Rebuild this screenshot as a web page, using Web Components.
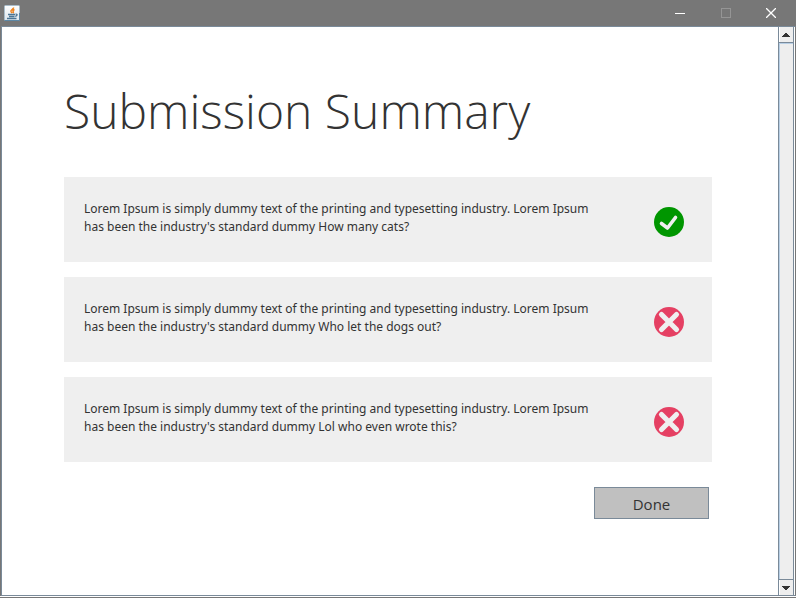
<!DOCTYPE html>
<html lang="en">
<head>
<meta charset="utf-8">
<title>Submission Summary</title>
<style>
  html, body { height: 100%; margin: 0; }
  body { font-family: "Noto Sans", "Open Sans", sans-serif; color: #333; }
</style>
</head>
<body>
<app-window>
  <submission-summary heading="Submission Summary">
    <result-card status="correct">Lorem Ipsum is simply dummy text of the printing and typesetting industry. Lorem Ipsum has been the industry's standard dummy How many cats?</result-card>
    <result-card status="wrong">Lorem Ipsum is simply dummy text of the printing and typesetting industry. Lorem Ipsum has been the industry's standard dummy Who let the dogs out?</result-card>
    <result-card status="wrong">Lorem Ipsum is simply dummy text of the printing and typesetting industry. Lorem Ipsum has been the industry's standard dummy Lol who even wrote this?</result-card>
    <done-button slot="actions">Done</done-button>
  </submission-summary>
</app-window>

<script>
  class BaseElement extends HTMLElement {
    constructor() {
      super();
      this.attachShadow({ mode: 'open' });
    }
    connectedCallback() {
      this.shadowRoot.innerHTML = this.render();
    }
  }

  class TitleBar extends BaseElement {
    render() {
      return `
        <style>
          :host { display: flex; height: 26px; align-items: center; justify-content: space-between; background: #777; }
          .logo { display: block; margin-left: 4px; }
          nav { display: flex; padding-right: 2px; }
          button { display: grid; place-items: center; width: 46px; height: 26px; padding: 0; border: 0; background: none; color: #fff; }
          button:disabled { color: #959595; width: 45px; }
          svg { display: block; }
        </style>
        <svg class="logo" width="16" height="16" viewBox="0 0 16 16" aria-hidden="true">
          <defs><linearGradient id="g" x1="0" y1="0" x2="0" y2="1"><stop offset="0" stop-color="#fff"/><stop offset="1" stop-color="#dce6ee"/></linearGradient></defs>
          <rect x=".5" y=".5" width="15" height="15" rx="1" fill="url(#g)" stroke="#a9bdcb"/>
          <path d="M.5 15.5h15V8" fill="none" stroke="#5c87a5"/>
          <path d="M9.5 2.500c.6 1.500-3.600 2.300-2.500 4.200L8 8.200M10.500 4.500c-1.800.8-1.800 1.500-1.200 2.300.3.500 0 1-.5 1.400" fill="none" stroke="#ee8420" stroke-width="1.500"/>
          <path d="M4 9.500h7M5 11.500h5.500M11.500 9.200c2.400-.4 2 1.700-.3 2.200M3 13.500h9.500" fill="none" stroke="#4b7695" stroke-width="1.300"/>
        </svg>
        <nav aria-label="Window controls">
          <button aria-label="Minimize"><svg width="10" height="10"><path d="M0 5.500h10" stroke="currentColor"/></svg></button>
          <button aria-label="Maximize" disabled><svg width="10" height="10"><rect x=".5" y=".5" width="9" height="9" fill="none" stroke="currentColor"/></svg></button>
          <button aria-label="Close"><svg width="10" height="10"><path d="M0 0l10 10M10 0L0 10" stroke="currentColor" stroke-width="1.300"/></svg></button>
        </nav>`;
    }
  }

  class ScrollBar extends BaseElement {
    render() {
      return `
        <style>
          :host { display: flex; flex-direction: column; box-sizing: border-box; width: 16px; border: 1px solid #7a8a99; border-width: 0 1px; background: #fff; }
          button { display: grid; place-items: center start; height: 15px; padding: 0 0 0 2px; border: 0; border-left: 1px solid #fff; background: #eee; flex: none; }
          .track { flex: 1; border: 1px solid #7a8a99; border-width: 1px 0; box-shadow: inset 1px 1px #b8cfe5; background: #eee; }
          svg { display: block; }
        </style>
        <button aria-label="Scroll up"><svg width="8" height="4" shape-rendering="crispEdges"><path d="M3 0h2v1h1v1h1v1h1v1H0V3h1V2h1V1h1z" fill="#333"/></svg></button>
        <div class="track"></div>
        <button aria-label="Scroll down"><svg width="8" height="4" shape-rendering="crispEdges"><path d="M0 0h8v1H7v1H6v1H5v1H3V3H2V2H1V1H0z" fill="#333"/></svg></button>`;
    }
  }

  class AppWindow extends BaseElement {
    render() {
      return `
        <style>
          :host { display: flex; flex-direction: column; box-sizing: border-box; min-height: 100%; background: #fff; border-bottom: 1px solid #777; }
          .body { flex: 1; display: flex; margin: 0 0 1px 1px; padding-right: 1px; border: 1px solid #7a8a99; border-right-color: #777; box-shadow: -1px 0 #777; }
          main { flex: 1; min-width: 0; }
        </style>
        <title-bar></title-bar>
        <div class="body">
          <main><slot></slot></main>
          <scroll-bar></scroll-bar>
        </div>`;
    }
  }

  class SubmissionSummary extends BaseElement {
    render() {
      return `
        <style>
          :host { display: block; padding: 48px 66px 24px 62px; }
          h1 { margin: 0; font: 300 48px/72px "Open Sans", "Noto Sans", sans-serif; }
          .list { display: flex; flex-direction: column; gap: 15px; margin-top: 30px; }
          footer { display: flex; justify-content: flex-end; padding: 25px 3px 0 0; }
        </style>
        <h1>${this.getAttribute('heading')}</h1>
        <div class="list"><slot></slot></div>
        <footer><slot name="actions"></slot></footer>`;
    }
  }

  class ResultCard extends BaseElement {
    render() {
      const correct = this.getAttribute('status') === 'correct';
      const mark = correct
        ? '<circle cx="15" cy="15" r="15" fill="#009600"/><path d="M7.500 16.500l6 4.500L21.500 10.500" fill="none" stroke="#efefef" stroke-width="3.600" stroke-linecap="round" stroke-linejoin="round"/>'
        : '<circle cx="15" cy="15" r="15" fill="#e54063"/><path d="M7.500 7.500l15 15M22.500 7.500l-15 15" fill="none" stroke="#efefef" stroke-width="5.200" stroke-linecap="round"/>';
      return `
        <style>
          :host { display: flex; justify-content: space-between; padding: 23px 28px 25px 20px; background: #efefef; }
          p { flex: 0 1 520px; margin: 0; font-size: 12px; line-height: 18px; }
          svg { flex: none; display: block; margin-top: 7px; }
        </style>
        <p><slot></slot></p>
        <svg width="30" height="30" viewBox="0 0 30 30" role="img" aria-label="${correct ? 'Correct' : 'Incorrect'}">${mark}</svg>`;
    }
  }

  class DoneButton extends BaseElement {
    render() {
      return `
        <style>
          :host { display: block; }
          button { display: block; box-sizing: border-box; min-width: 115px; height: 32px; padding: 2px 16px 0; border: 1px solid #7a8a99; background: #c0c0c0; color: inherit; font: 15px/22px "Open Sans", "Noto Sans", sans-serif; }
        </style>
        <button type="button"><slot></slot></button>`;
    }
  }

  customElements.define('title-bar', TitleBar);
  customElements.define('scroll-bar', ScrollBar);
  customElements.define('result-card', ResultCard);
  customElements.define('done-button', DoneButton);
  customElements.define('submission-summary', SubmissionSummary);
  customElements.define('app-window', AppWindow);
</script>
</body>
</html>
